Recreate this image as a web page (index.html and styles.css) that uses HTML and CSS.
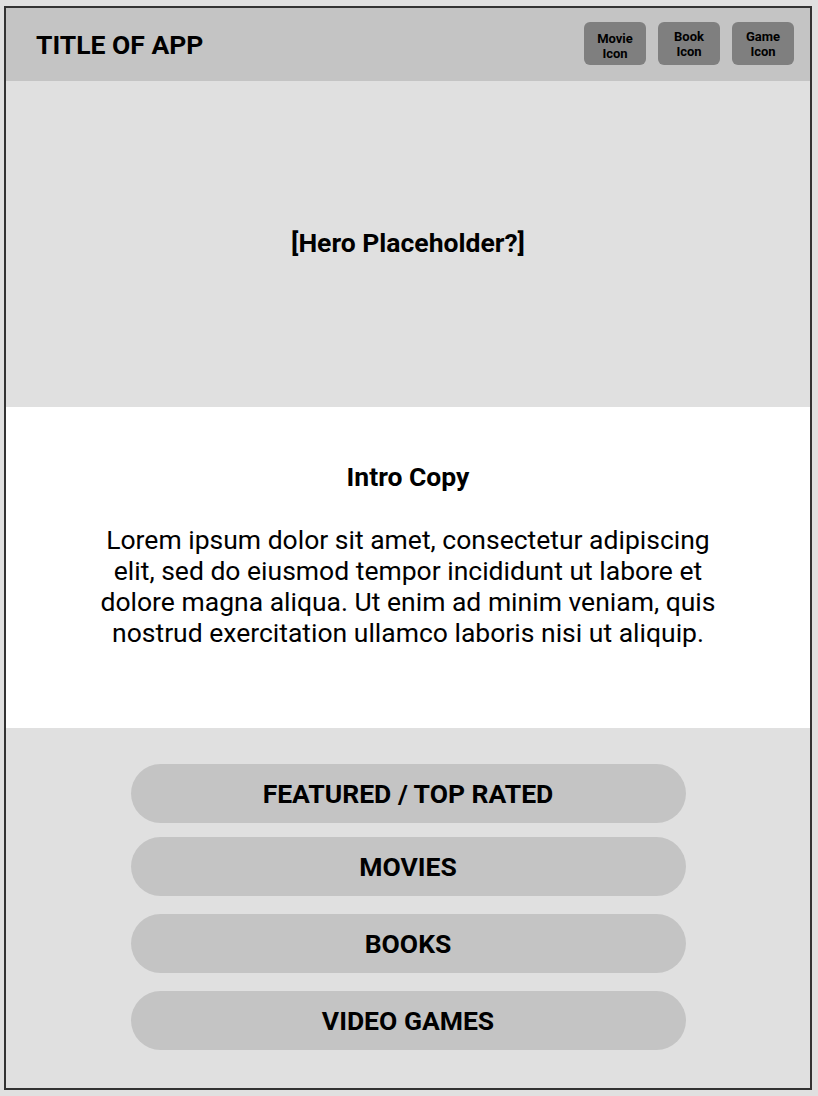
FILE: index.html
```html
<!DOCTYPE html>
<html lang="en">
<head>
<meta charset="utf-8">
<title>Title of App</title>
<link rel="stylesheet" href="styles.css">
</head>
<body>
<div class="frame">
  <header class="topbar">
    <h1 class="app-title">TITLE OF APP</h1>
    <nav class="icons">
      <button class="icon-btn icon-movie">Movie<br>Icon</button>
      <button class="icon-btn">Book<br>Icon</button>
      <button class="icon-btn">Game<br>Icon</button>
    </nav>
  </header>
  <section class="hero">
    <p class="hero-text">[Hero Placeholder?]</p>
  </section>
  <section class="intro">
    <h2 class="intro-title">Intro Copy</h2>
    <p class="intro-body">Lorem ipsum dolor sit amet, consectetur adipiscing elit, sed do eiusmod tempor incididunt ut labore et dolore magna aliqua. Ut enim ad minim veniam, quis nostrud exercitation ullamco laboris nisi ut aliquip.</p>
  </section>
  <section class="menu">
    <a class="pill pill-first">FEATURED / TOP RATED</a>
    <a class="pill">MOVIES</a>
    <a class="pill">BOOKS</a>
    <a class="pill">VIDEO GAMES</a>
  </section>
</div>
</body>
</html>
```
FILE: styles.css
```css
* { box-sizing: border-box; }
html, body {
  margin: 0;
  padding: 0;
  background: #e0e0e0;
  font-family: Roboto, "Liberation Sans", Arial, sans-serif;
  color: #000;
}
.frame {
  margin: 6px 0 0 4px;
  width: 808px;
  height: 1084px;
  border: 2px solid #333;
  display: flex;
  flex-direction: column;
  background: #e0e0e0;
}
.topbar {
  height: 73px;
  background: #c4c4c4;
  display: flex;
  align-items: center;
  justify-content: space-between;
  padding: 0 16px 0 30px;
}
.app-title {
  margin: 0;
  font-size: 26.5px;
  font-weight: 700;
  letter-spacing: 0;
}
.icons {
  display: flex;
  gap: 12px;
  margin-top: -2px;
}
.icon-btn {
  width: 62px;
  height: 43px;
  border: none;
  border-radius: 6px;
  background: #7f7f7f;
  font-family: Roboto, "Liberation Sans", Arial, sans-serif;
  font-size: 13px;
  font-weight: 700;
  line-height: 15px;
  color: #000;
  padding: 1px 0 0;
}
.icon-movie { padding: 5px 0 0; }
.hero {
  height: 326px;
  display: flex;
  align-items: center;
  justify-content: center;
}
.hero-text {
  margin: 0;
  font-size: 26.5px;
  font-weight: 700;
  padding-bottom: 4px;
}
.intro {
  height: 321px;
  background: #fff;
  text-align: center;
  padding: 55px 60px 0;
}
.intro-title {
  margin: 0 0 32px;
  font-size: 26.5px;
  font-weight: 700;
  line-height: 30px;
}
.intro-body {
  margin: 0 auto;
  width: 630px;
  font-size: 26.5px;
  line-height: 31px;
}
.menu {
  flex: 1;
  display: flex;
  flex-direction: column;
  align-items: center;
  gap: 18px;
  padding-top: 36px;
}
.pill {
  width: 555px;
  height: 59px;
  border-radius: 30px;
  background: #c4c4c4;
  display: flex;
  align-items: center;
  justify-content: center;
  font-size: 26.5px;
  font-weight: 700;
}
.pill-first { margin-bottom: -4px; }
```
